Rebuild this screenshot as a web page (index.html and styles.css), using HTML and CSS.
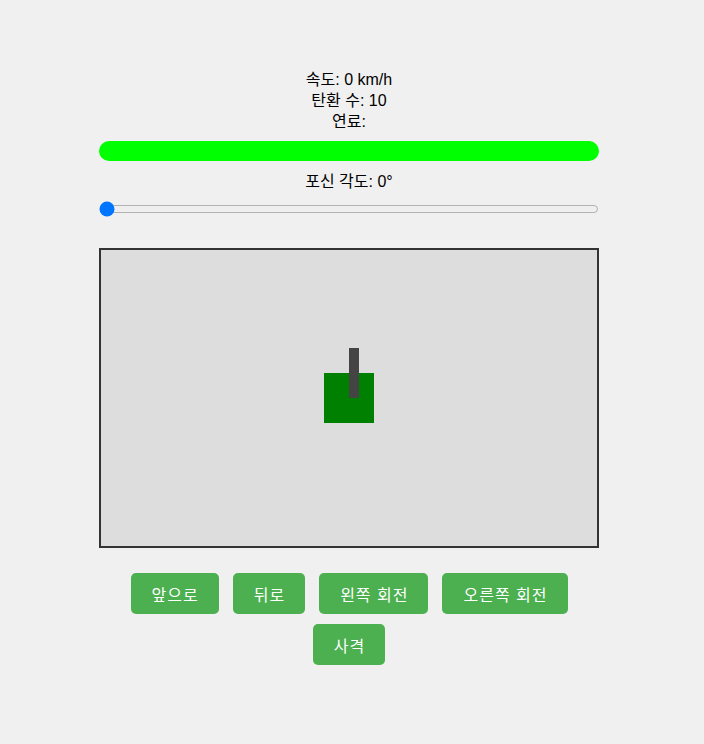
FILE: index.html
```html
<!DOCTYPE html>
<html lang="ko">
<head>
<meta charset="utf-8">
<link rel="stylesheet" href="styles.css">
</head>
<body>
<div class="game">
  <div class="stats">
    <div>속도: <span>0</span> km/h</div>
    <div>탄환 수: <span>10</span></div>
    <div>연료:</div>
  </div>
  <div class="fuel"><div class="fuel-fill"></div></div>
  <div class="angle-label">포신 각도: 0°</div>
  <input class="angle" type="range" min="0" max="360" value="0">
  <div class="field">
    <div class="tank"><div class="barrel"></div></div>
  </div>
  <div class="controls">
    <button class="btn">앞으로</button>
    <button class="btn">뒤로</button>
    <button class="btn">왼쪽 회전</button>
    <button class="btn">오른쪽 회전</button>
    <button class="btn">사격</button>
  </div>
</div>
</body>
</html>
```
FILE: styles.css
```css
html, body {
  margin: 0;
  padding: 0;
  background: #f0f0f0;
}
body {
  font-family: "Liberation Sans", Arial, "Noto Sans CJK KR", sans-serif;
  font-size: 16px;
  color: #000;
}
.game {
  width: 500px;
  margin: 0 auto;
  padding-top: 69px;
  display: flex;
  flex-direction: column;
  align-items: stretch;
  transform: translateX(-3px);
}
.stats {
  text-align: center;
  line-height: 21px;
}
.fuel {
  margin-top: 9px;
  height: 20px;
  border-radius: 10px;
  background: #ccc;
  overflow: hidden;
}
.fuel-fill {
  width: 100%;
  height: 100%;
  background: #00ff00;
}
.angle-label {
  margin-top: 10px;
  text-align: center;
  line-height: 21px;
}
.angle {
  width: 500px;
  margin: 9px 0 0 0;
  height: 16px;
}
.field {
  margin-top: 31px;
  width: 496px;
  height: 296px;
  border: 2px solid #333;
  background: #ddd;
  display: flex;
  align-items: center;
  justify-content: center;
}
.tank {
  width: 50px;
  height: 50px;
  background: #008000;
  position: relative;
}
.barrel {
  position: absolute;
  left: 25px;
  top: -25px;
  width: 10px;
  height: 50px;
  background: #444;
}
.controls {
  margin-top: 25px;
  display: flex;
  flex-wrap: wrap;
  justify-content: center;
  column-gap: 14px;
  row-gap: 10px;
}
.btn {
  font-family: inherit;
  font-size: 16px;
  letter-spacing: 1px;
  color: #fff;
  background: #4caf50;
  border: none;
  border-radius: 5px;
  padding: 0 20px 0 21px;
  height: 41px;
  cursor: pointer;
}
```
